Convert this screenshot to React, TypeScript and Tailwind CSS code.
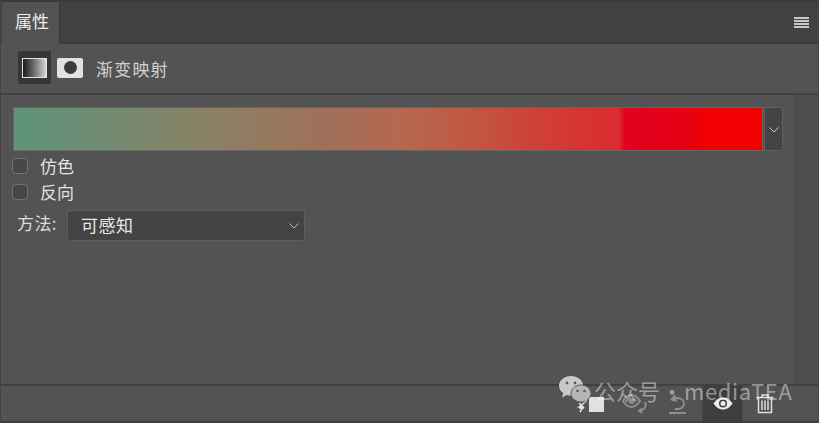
import React from 'react';

const cjk = { fontFamily: '"Noto Sans CJK SC", "Noto Sans", sans-serif' };

const stops =
  'linear-gradient(90deg, #5f9479 0%, #6d8d74 10%, #8b8164 26%, #a0705a 41%, #b56850 52%, #c25540 62%, #cf4035 70%, #d9302f 78%, #dc2c30 80.800%, #e00020 81.800%, #e60012 90%, #f00000 92.500%, #f00000 100%)';

const Caret: React.FC<{ color: string }> = ({ color }) => (
  <svg width="10" height="6" viewBox="0 0 10 6" className="shrink-0">
    <path d="M0.500 0.500L5 5L9.500 0.500" fill="none" stroke={color} strokeWidth="1" />
  </svg>
);

const Check: React.FC<{ label: string }> = ({ label }) => (
  <div className="-ml-[1px] flex h-[26px] items-center">
    <div className="h-4 w-4 rounded-[4px] border border-[#747474] bg-[#474747]" />
    <span className="ml-[12px] pb-[2px] text-[17px] leading-none text-[#e2e2e2]">{label}</span>
  </div>
);

const Watermark = () => (
  <div className="absolute left-[557px] top-[374px] flex items-center text-[22px] leading-none text-white/45">
    <svg width="36" height="34" viewBox="0 0 36 34">
      <path d="M13 2C6.500 2 1 6.400 1 11.800c0 3 1.700 5.700 4.300 7.500L4 23.500l4.800-2.500c1.400.4 2.800.6 4.200.6 6.500 0 12-4.400 12-9.800S19.500 2 13 2z" fill="#c9c9c9" />
      <path d="M23 11c-5.500 0-10 3.800-10 8.500s4.500 8.500 10 8.500c1.100 0 2.200-.2 3.200-.5l3.800 2.200-1-3.500c2.400-1.600 4-4 4-6.700 0-4.700-4.500-8.500-10-8.500z" fill="#b5b5b5" stroke="#5a5a5a" strokeWidth="1" />
      <circle cx="9" cy="9" r="1.400" fill="#5a5a5a" />
      <circle cx="17" cy="9" r="1.400" fill="#5a5a5a" />
      <circle cx="19.500" cy="17" r="1.300" fill="#5a5a5a" />
      <circle cx="26.500" cy="17" r="1.300" fill="#5a5a5a" />
    </svg>
    <div className="mb-[3px] flex items-center whitespace-nowrap">
      <span>公众号</span>
      <span className="ml-[1px]">·</span>
      <span className="ml-[1px] tracking-[0.6px]">mediaTEA</span>
    </div>
  </div>
);

export default function App() {
  return (
    <div className="relative flex h-[423px] w-[819px] flex-col overflow-hidden border-x border-x-[#444444] bg-[#535353] text-[#e6e6e6]" style={cjk}>
      {/* tab strip */}
      <div className="flex h-[44px] shrink-0 items-stretch border-b-2 border-t-2 border-b-[#3c3c3c] border-t-[#3a3a3a] bg-[#424242]">
        <div className="-mb-[2px] ml-[1px] flex w-[58px] items-center justify-center border-r border-[#3a3a3a] bg-[#535353] pb-[5px] pl-[3px] text-[17px] text-[#ececec]">
          属性
        </div>
        <div className="flex flex-1 items-center justify-end pr-[9px]">
          <div className="flex w-[15px] flex-col gap-[1px]">
            <div className="h-[2px] bg-[#c8c8c8]" />
            <div className="h-[2px] bg-[#c8c8c8]" />
            <div className="h-[2px] bg-[#c8c8c8]" />
            <div className="h-[2px] bg-[#c8c8c8]" />
          </div>
        </div>
      </div>

      {/* adjustment header */}
      <div className="flex h-[51px] shrink-0 items-center border-b-2 border-[#404040] pb-[2px] pl-[16px]">
        <div className="flex h-[35px] w-[35px] items-center justify-center rounded-[3px] border border-[#545454] bg-[#363636]">
          <div className="h-[20px] w-[25px] border border-[#e4e4e4] bg-gradient-to-r from-[#1c1c1c] to-[#d8d8d8]" />
        </div>
        <div className="ml-[5px] flex h-[20px] w-[26px] items-center justify-center rounded-[2px] bg-[#e2e2e2]">
          <div className="h-[13px] w-[13px] rounded-full bg-[#3c3c3c]" />
        </div>
        <span className="ml-[13px] pt-[3px] text-[17px] tracking-[1.200px] text-[#d2d2d2]">渐变映射</span>
      </div>

      {/* body */}
      <div className="flex min-h-0 flex-1">
        <div className="flex-1 pl-[12px] pt-[12px]">
          <div className="flex h-[44px] w-[770px]">
            <div className="h-[44px] w-[750px] border border-[#666666]" style={{ backgroundImage: stops, backgroundClip: 'padding-box' }} />
            <div className="ml-[1px] flex h-[44px] w-[19px] items-center justify-center rounded-r-[3px] border border-[#5f5f5f] bg-[#444444] pt-[2px]">
              <Caret color="#cfcfcf" />
            </div>
          </div>
          <div className="mt-[2px]">
            <Check label="仿色" />
            <Check label="反向" />
          </div>
          <div className="mt-[5px] flex items-center pl-[4px]">
            <span className="w-[50px] pb-[7px] text-[17px] leading-none tracking-[0.4px] text-[#dcdcdc]">方法:</span>
            <div className="flex h-[31px] w-[238px] items-center justify-between rounded-[3px] border border-[#5e5e5e] bg-[#434343] pl-[13px] pr-[5px]">
              <span className="pb-[3px] text-[17px] leading-none tracking-[0.5px] text-[#e8e8e8]">可感知</span>
              <Caret color="#bdbdbd" />
            </div>
          </div>
        </div>
        <div className="w-[25px] shrink-0 bg-[#4e4e4e]" />
      </div>

      {/* footer */}
      <div className="flex h-[39px] shrink-0 items-stretch justify-end border-b-2 border-t-2 border-b-[#3c3c3c] border-t-[#404040] pr-[29px]">
        <div className="flex items-center">
          <svg width="28" height="18" viewBox="0 0 28 18" className="mr-[18px] mt-[2px]">
            <rect x="13" y="1" width="15" height="15" fill="#e0e0e0" />
            <path d="M9 6 L3 11 H7 L4 16 M3 7 L8 12 M3 12 H8" stroke="#e0e0e0" strokeWidth="1.500" fill="none" />
          </svg>
          <svg width="28" height="22" viewBox="0 0 28 22" className="mr-[17px]">
            <path d="M1 8c3-4.500 6-6 8.500-6S15 3.500 18 8c-3 4.500-6 6-8.500 6S4 12.500 1 8z" fill="none" stroke="#8f8f8f" strokeWidth="2" />
            <circle cx="9.500" cy="8" r="3" fill="#8f8f8f" />
            <path d="M23 9c2 4-1 9-6 9" fill="none" stroke="#8f8f8f" strokeWidth="1.800" />
            <path d="M20 14.500 L15.500 18 L20 21z" fill="#8f8f8f" />
          </svg>
          <svg width="22" height="22" viewBox="0 0 22 22" className="mr-[13px]">
            <path d="M5 7.500C7 5.500 9 5 11 5c3.500 0 6 2.500 6 5.500S14.500 16 11 16H8" fill="none" stroke="#8f8f8f" strokeWidth="1.800" />
            <path d="M8 1 L3 7 L10 9z" fill="#8f8f8f" />
            <rect x="2" y="19" width="17" height="2" fill="#8f8f8f" />
          </svg>
        </div>
        <div className="flex w-[41px] items-center justify-center border-x border-[#4a4a4a] bg-[#3e3e3e]">
          <svg width="20" height="13" viewBox="0 0 20 13">
            <path d="M0.500 6.500C3.500 2 7 0.500 10 0.500s6.500 1.500 9.500 6c-3 4.500-6.500 6-9.500 6S3.500 11 0.500 6.500z" fill="#ececec" />
            <circle cx="10" cy="6.500" r="4" fill="#3e3e3e" />
            <circle cx="10" cy="6.500" r="2.500" fill="#ececec" />
          </svg>
        </div>
        <div className="flex w-[46px] items-center justify-start pl-[13px]">
          <svg width="18" height="20" viewBox="0 0 18 20">
            <path d="M0.500 3.500H17.500M6 3V1H12V3" stroke="#dedede" strokeWidth="1.500" fill="none" />
            <path d="M2.500 4V18.500H15.500V4" stroke="#dedede" strokeWidth="1.500" fill="none" />
            <path d="M6 6.500V16M9 6.500V16M12 6.500V16" stroke="#dedede" strokeWidth="1.500" />
          </svg>
        </div>
      </div>

      <Watermark />
    </div>
  );
}
